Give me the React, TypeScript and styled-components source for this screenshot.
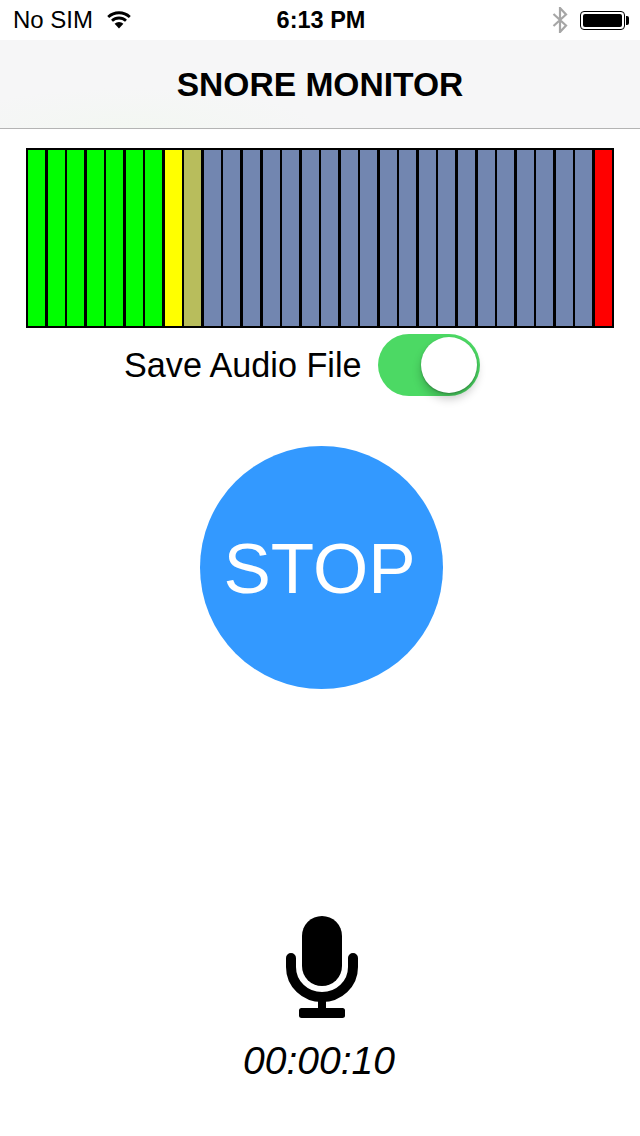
import React from 'react';
import styled, { createGlobalStyle } from 'styled-components';

const GlobalStyle = createGlobalStyle`
    html, body {
        margin: 0;
        padding: 0;
        background: #fff;
    }
    body {
        font-family: "Liberation Sans", Arial, sans-serif;
        color: #000;
    }
`;

const Page = styled.div`
    width: 640px;
    height: 1136px;
    display: flex;
    flex-direction: column;
    overflow: hidden;
    background: #fff;
`;

const StatusBar = styled.div`
    height: 40px;
    display: grid;
    grid-template-columns: 1fr auto 1fr;
    align-items: center;
    padding: 0 11px 0 13px;
    font-size: 24px;
`;

const StatusLeft = styled.div`
    display: flex;
    align-items: center;
    gap: 14px;
`;

const Clock = styled.div`
    font-weight: 700;
    font-size: 23.5px;
`;

const StatusRight = styled.div`
    display: flex;
    align-items: center;
    justify-content: flex-end;
    gap: 12px;
`;

const Battery = styled.div`
    position: relative;
    width: 45px;
    height: 19px;
    box-sizing: border-box;
    padding: 2px;
    border: 1px solid #000;
    border-radius: 4px;
    margin-right: 4px;

    &::before {
        content: '';
        display: block;
        height: 100%;
        background: #000;
        border-radius: 2px;
    }

    &::after {
        content: '';
        position: absolute;
        right: -5px;
        top: 4px;
        width: 3px;
        height: 9px;
        background: #000;
        border-radius: 0 2px 2px 0;
    }
`;

const NavBar = styled.div`
    height: 88px;
    box-sizing: content-box;
    border-bottom: 1px solid #b4b4b4;
    display: flex;
    align-items: center;
    justify-content: center;
    background:
        radial-gradient(ellipse 190px 40px at 130px 88px, #f3f7f2, rgba(243, 247, 242, 0)),
        #f6f6f7;
`;

const Title = styled.h1`
    margin: 1px 0 0;
    font-size: 33.6px;
    font-weight: 700;
`;

const Meter = styled.div`
    margin: 19px 26px 0;
    height: 180px;
    box-sizing: border-box;
    padding: 2px;
    background: #000;
    display: flex;
    gap: 2.6px;
`;

const Segment = styled.div<{ $color: string }>`
    flex: 1;
    background: ${(p) => p.$color};
`;

const SaveRow = styled.div`
    margin-top: 6px;
    padding-left: 124px;
    display: flex;
    align-items: center;
    gap: 16px;
`;

const SaveLabel = styled.span`
    font-size: 34.2px;
`;

const Switch = styled.div`
    position: relative;
    width: 102px;
    height: 62px;
    border-radius: 31px;
    background: #4cd964;
`;

const Knob = styled.div`
    position: absolute;
    right: 3px;
    top: 3px;
    width: 56px;
    height: 56px;
    border-radius: 50%;
    background: #fff;
    box-shadow: 0 6px 10px rgba(0, 0, 0, 0.22), 0 1px 2px rgba(0, 0, 0, 0.25);
`;

const StopButton = styled.button`
    align-self: flex-start;
    margin: 50px 0 0 200px;
    width: 243px;
    height: 243px;
    padding: 1px 4px 0 0;
    border: 0;
    border-radius: 50%;
    background: #3399ff;
    color: #fff;
    font-family: inherit;
    font-size: 71px;
    font-weight: 400;
`;

const MicBlock = styled.div`
    margin-top: 227px;
    display: flex;
    flex-direction: column;
    align-items: center;
`;

const MicIcon = styled.svg`
    display: block;
    width: 72px;
    height: 102px;
    margin-left: 4px;
`;

const Timer = styled.div`
    margin-top: 25px;
    font-style: italic;
    font-size: 39px;
    line-height: 36px;
    padding-right: 2px;
`;

const segmentColors = [
    ...Array(7).fill('#00ff00'),
    '#ffff00',
    '#b8bd5c',
    ...Array(20).fill('#7286b0'),
    '#ff0000',
];

const App = () => {
    return (
        <Page>
            <GlobalStyle />
            <StatusBar>
                <StatusLeft>
                    <span>No SIM</span>
                    <svg width="24" height="18" viewBox="0 0 24 18">
                        <path d="M12 17.5 7.6 12.7a6.4 6.4 0 0 1 8.8 0Z" fill="#000" />
                        <path d="M5 9.8a10.2 10.2 0 0 1 14 0" fill="none" stroke="#000" strokeWidth="2.8" />
                        <path d="M1.2 6a15.8 15.8 0 0 1 21.6 0" fill="none" stroke="#000" strokeWidth="2.8" />
                    </svg>
                </StatusLeft>
                <Clock>6:13 PM</Clock>
                <StatusRight>
                    <svg width="16" height="26" viewBox="0 0 16 26">
                        <path d="M1.5 7 14 18.5 8 25V1l6 6.5L1.5 19" fill="none" stroke="#a6a6a6" strokeWidth="2.2" />
                    </svg>
                    <Battery />
                </StatusRight>
            </StatusBar>
            <NavBar>
                <Title>SNORE MONITOR</Title>
            </NavBar>
            <Meter>
                {segmentColors.map((color, i) => (
                    <Segment key={i} $color={color} />
                ))}
            </Meter>
            <SaveRow>
                <SaveLabel>Save Audio File</SaveLabel>
                <Switch>
                    <Knob />
                </Switch>
            </SaveRow>
            <StopButton>STOP</StopButton>
            <MicBlock>
                <MicIcon viewBox="0 0 72 102">
                    <rect x="16" y="0" width="40" height="70" rx="20" fill="#000" />
                    <path
                        d="M5 42v9c0 17 14 30 31 30s31-13 31-30v-9"
                        fill="none"
                        stroke="#000"
                        strokeWidth="10"
                        strokeLinecap="round"
                    />
                    <rect x="32" y="82" width="8" height="12" fill="#000" />
                    <rect x="13" y="92" width="46" height="10" rx="2.5" fill="#000" />
                </MicIcon>
                <Timer>00:00:10</Timer>
            </MicBlock>
        </Page>
    );
};

export default App;
